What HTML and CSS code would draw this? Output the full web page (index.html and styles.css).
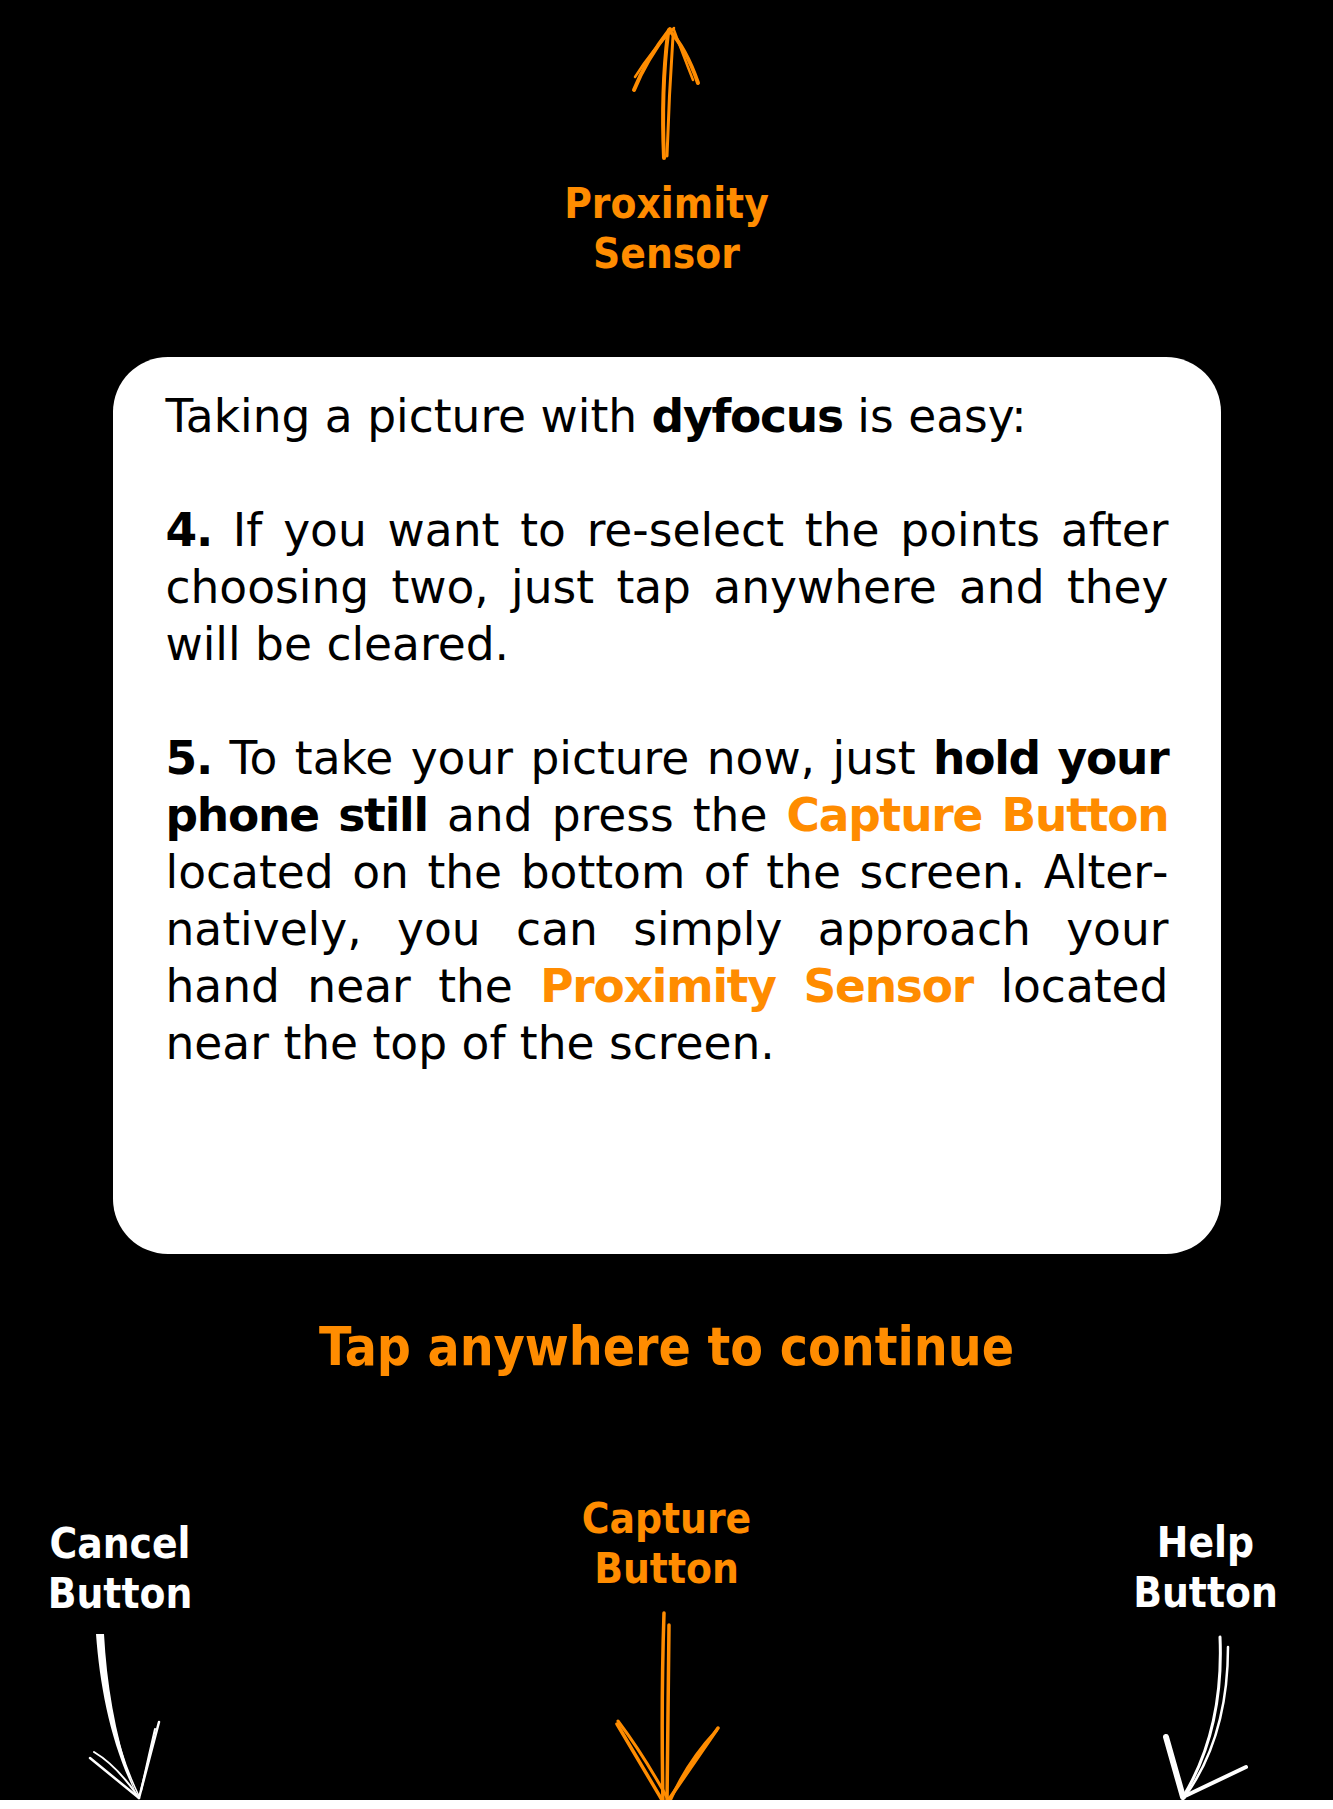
FILE: index.html
```html
<!DOCTYPE html>
<html lang="en">
<head>
<meta charset="utf-8">
<title>dyfocus help</title>
<link rel="stylesheet" href="styles.css">
</head>
<body>
<div class="screen">
  <header class="sensor">
    <svg class="arrow" width="120" height="179" viewBox="0 0 120 179">
      <g fill="none" stroke="#ff8c00" stroke-linecap="round" stroke-linejoin="round">
        <path d="M58 158 Q55 90 62 33" stroke-width="4"/>
        <path d="M61 156 Q63 95 67 36" stroke-width="3"/>
        <path d="M28 90 Q40 60 64 29" stroke-width="4"/>
        <path d="M29 77 Q46 50 68 28" stroke-width="2.5"/>
        <path d="M63 30 Q80 48 92 83" stroke-width="4"/>
        <path d="M68 30 Q76 52 87 80" stroke-width="2.5"/>
      </g>
    </svg>
    <p class="label label-orange">Proximity<br>Sensor</p>
  </header>

  <section class="card">
    <p class="card-text">Taking a picture with <b>dyfocus</b> is easy:</p>
    <p class="card-text"><b>4.</b> If you want to re-select the points after choosing two, just tap anywhere and they will be cleared.</p>
    <p class="card-text"><b>5.</b> To take your picture now, just <b>hold your phone still</b> and press the <b class="hl">Capture Button</b> located on the bottom of the screen. Alter&shy;natively, you can simply approach your hand near the <b class="hl">Proximity Sensor</b> located near the top of the screen.</p>
  </section>

  <p class="tap">Tap anywhere to continue</p>

  <div class="buttons">
    <div class="btn-col">
      <p class="label">Cancel<br>Button</p>
      <svg class="arrow" width="120" height="181" viewBox="0 0 120 181">
        <path d="M36 15 C40 70 52 130 78 179 C57 128 47 70 44 15 Z" fill="#fff"/>
        <g fill="none" stroke="#fff" stroke-linecap="round" stroke-linejoin="round">
          <path d="M42 24 C46 82 59 136 79 177" stroke-width="1.5"/>
          <path d="M30 139 L79 179" stroke-width="2.5"/>
          <path d="M34 133 Q56 146 77 176" stroke-width="2"/>
          <path d="M99 103 L79 179" stroke-width="2.5"/>
          <path d="M95 110 Q88 140 81 172" stroke-width="2"/>
        </g>
      </svg>
    </div>
    <div class="btn-col">
      <p class="label label-orange">Capture<br>Button</p>
      <svg class="arrow" width="140" height="206" viewBox="0 0 140 206">
        <g fill="none" stroke="#ff8c00" stroke-linecap="round" stroke-linejoin="round">
          <path d="M67 19 Q64 110 66 211" stroke-width="3.5"/>
          <path d="M72 31 Q71 120 70 209" stroke-width="3.5"/>
          <path d="M20 130 L68 211" stroke-width="3.5"/>
          <path d="M21 127 Q46 160 72 207" stroke-width="3"/>
          <path d="M121 134 L68 211" stroke-width="3.5"/>
          <path d="M119 137 Q90 168 73 207" stroke-width="3"/>
        </g>
      </svg>
    </div>
    <div class="btn-col btn-col-help">
      <p class="label">Help<br>Button</p>
      <svg class="arrow" width="140" height="182" viewBox="0 0 140 182">
        <g fill="none" stroke="#fff" stroke-linecap="round" stroke-linejoin="round">
          <path d="M84 19 Q88 112 47 179" stroke-width="3"/>
          <path d="M92 29 Q92 118 50 177" stroke-width="2.5"/>
          <path d="M30 119 L47 179" stroke-width="6"/>
          <path d="M110 149 L47 179" stroke-width="4"/>
        </g>
      </svg>
    </div>
  </div>
</div>
</body>
</html>
```
FILE: styles.css
```css
html, body {
  margin: 0;
  padding: 0;
  background: #fff;
}

.screen {
  background: #000;
  height: 1800px;
  display: flex;
  flex-direction: column;
  align-items: center;
}

.sensor {
  display: flex;
  flex-direction: column;
  align-items: center;
}

.arrow {
  display: block;
  overflow: visible;
}

.label {
  margin: 0;
  font-family: "DejaVu Sans Condensed", "DejaVu Sans", sans-serif;
  font-stretch: condensed;
  font-weight: 700;
  font-size: 42px;
  line-height: 50px;
  text-align: center;
  color: #fff;
}

.label-orange {
  color: #ff8c00;
}

.card {
  margin-top: 78px;
  width: 1108px;
  height: 897px;
  box-sizing: border-box;
  padding: 31px 52px 0 53px;
  background: #fff;
  border-radius: 55px;
}

.card-text {
  margin: 0 0 57px;
  font-family: "DejaVu Sans", sans-serif;
  font-size: 45.5px;
  line-height: 57px;
  text-align: justify;
  hyphens: manual;
  color: #000;
}

.card-text b {
  letter-spacing: -1.2px;
}

.hl {
  color: #ff8c00;
}

.tap {
  margin: 61px 0 0;
  font-family: "DejaVu Sans Condensed", "DejaVu Sans", sans-serif;
  font-stretch: condensed;
  font-weight: 700;
  font-size: 53px;
  line-height: 64px;
  color: #ff8c00;
}

.buttons {
  flex: 1;
  align-self: stretch;
  display: grid;
  grid-template-columns: 240px 853px 240px;
}

.btn-col {
  display: flex;
  flex-direction: column;
  align-items: center;
  justify-content: flex-end;
}

.btn-col-help {
  padding-right: 15px;
}
```
